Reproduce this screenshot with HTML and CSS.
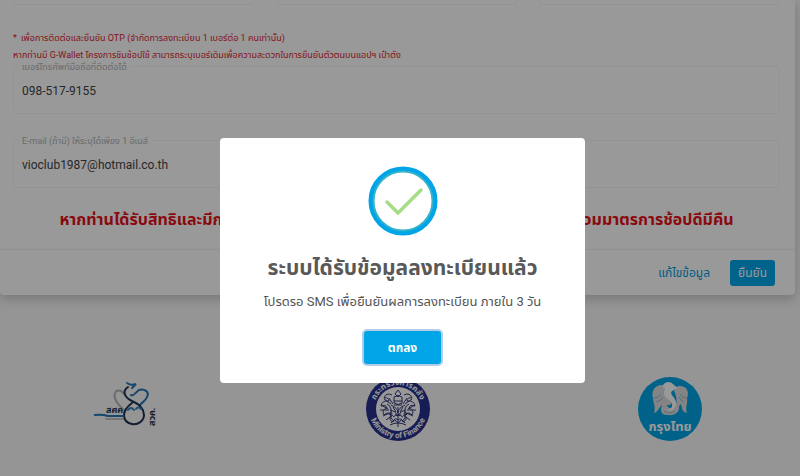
FILE: index.html
```html
<!DOCTYPE html>
<html lang="th">
<head>
    <meta charset="UTF-8">
    <meta name="viewport" content="width=device-width, initial-scale=1.0">
    <title>ลงทะเบียน</title>
    <link rel="stylesheet" href="styles.css">
</head>
<body>
    <main class="page">
        <form class="card">
            <div class="card-body">
                <div class="field-row">
                    <div class="field-end"></div>
                    <div class="field-end"></div>
                    <div class="field-end"></div>
                </div>

                <div class="notice">
                    <p><span class="star">*</span> เพื่อการติดต่อและยืนยัน OTP (จำกัดการลงทะเบียน 1 เบอร์ต่อ 1 คนเท่านั้น)</p>
                    <p>หากท่านมี G-Wallet โครงการชิมช้อปใช้ สามารถระบุเบอร์เดิมเพื่อความสะดวกในการยืนยันตัวตนบนแอปฯ เป๋าตัง</p>
                </div>

                <div class="field">
                    <label for="phone">เบอร์โทรศัพท์มือถือที่ติดต่อได้</label>
                    <input type="text" id="phone" value="098-517-9155">
                </div>
                <div class="field">
                    <label for="email">E-mail (ถ้ามี) ให้ระบุได้เพียง 1 อีเมล์</label>
                    <input type="text" id="email" value="vioclub1987@hotmail.co.th">
                </div>

                <h3 class="warning">หากท่านได้รับสิทธิและมีการใช้จ่ายตามโครงการภายในระยะเวลา จะไม่สามารถเข้าร่วมมาตรการช้อปดีมีคืน</h3>
            </div>

            <div class="card-footer">
                <button type="button" class="btn btn-link">แก้ไขข้อมูล</button>
                <button type="button" class="btn btn-primary">ยืนยัน</button>
            </div>
        </form>

        <footer class="logos">
            <svg class="logo" viewBox="0 0 64 64" role="img" aria-label="สศค.">
                <g fill="none" stroke-linecap="round">
                    <path d="M30 33C24 28 19 21 21 16C22 13 27 12 30 17" stroke="#b4b4b4" stroke-width="2"/>
                    <path d="M33 6Q37 9 42 7L38 11" stroke="#2878b8" stroke-width="2"/>
                    <path d="M37 18C39 20 42 15 45 13C50 11 56 15 53 20C51 25 48 25 46 28" stroke="#2873b4" stroke-width="2"/>
                    <path d="M34 10C28 14 30 20 38 24C45 27 50 31 50 38C50 44 44 48 38 47C32 46 30 42 30 38C30 33 34 29 38 26" stroke="#1e3250" stroke-width="2"/>
                    <path d="M34 33Q37 29 40 33M42 32Q44 29 47 32" stroke="#3282be" stroke-width="2"/>
                    <path d="M1 38Q8 37 14 39H29" stroke="#2378b8" stroke-width="2"/>
                    <path d="M12 42H29" stroke="#888" stroke-width="1" stroke-dasharray="2 1"/>
                </g>
                <text x="12" y="36" class="fpo-name">สศค.</text>
                <text x="0" y="0" class="fpo-name" transform="translate(61 49) rotate(-90)">สวค.</text>
            </svg>

            <svg class="logo" viewBox="0 0 64 64" role="img" aria-label="Ministry of Finance">
                <defs>
                    <path id="seal-top" d="M8 32A24 24 0 0 1 56 32"/>
                    <path id="seal-bottom" d="M3 32A29 29 0 0 0 61 32"/>
                </defs>
                <circle cx="32" cy="32" r="32" fill="#29308c"/>
                <circle cx="32" cy="32" r="22" fill="#fff"/>
                <text class="seal-text"><textPath href="#seal-top" startOffset="50%">กระทรวงการคลัง</textPath></text>
                <text class="seal-text"><textPath href="#seal-bottom" startOffset="50%">Ministry of Finance</textPath></text>
                <g fill="none" stroke="#353b78" stroke-width="1">
                    <path d="M32 13l3 4-3 3-3-3zM28 20q4-3 8 0v6q-4 3-8 0z"/>
                    <path d="M26 18q-6-3-8 3q5-1 5 3q-7-1-8 5q5-2 6 2q-6 2-3 7q4-4 7 0q-3 5 2 7q2-5 5-2"/>
                    <path d="M38 18q6-3 8 3q-5-1-5 3q7-1 8 5q-5-2-6 2q6 2 3 7q-4-4-7 0q3 5-2 7q-2-5-5-2"/>
                    <path d="M25 28q7 3 7 8q0-5 7-8M24 33q5 0 8 6q3-6 8-6M27 40q5-4 10 0M29 43q3 5 6 0M32 30v20"/>
                    <path d="M21 27q3 1 4 5t-2 6M43 27q-3 1-4 5t2 6M26 36q-3 5 2 8M38 36q3 5-2 8M23 21l4 6M41 21l-4 6"/>
                    <path d="M14 33h9M41 33h9M17 39l9-4M47 39l-9-4M20 43l7-5M44 43l-7-5M24 48q8-4 16 0M25 46l4-4M39 46l-4-4"/>
                    <path d="M15 28l7 4M49 28l-7 4M18 22l7 5M46 22l-7 5M27 30l3 5M37 30l-3 5M28 24h8M28 28h8M29 38h6"/>
                </g>
            </svg>

            <svg class="logo" viewBox="0 0 64 64" role="img" aria-label="กรุงไทย">
                <circle cx="32" cy="32" r="32" fill="#00a4e4"/>
                <path d="M24 8C16 8 13 15 15 21C15 26 18 29 16 36C21 34 21 30 24 28C22 33 23 38 29 38C37 39 42 35 41 29L43 27C44 31 44 35 49 36C47 31 50 26 49 21C52 14 48 8 40 9L36 14C39 20 40 27 36 30C33 32 29 31 29 28C34 29 35 24 31 22C26 20 24 16 27 12Z" fill="#ddd"/>
                <path d="M27 6Q32 3 36 8L40 11L34 14C31 17 37 20 38 25C39 31 34 35 29 33C35 32 36 27 31 23C26 20 24 16 27 12L24 9Z" fill="#fff"/>
                <path d="M16 21Q21 21 23 17M18 25Q23 24 25 20M48 21Q44 21 42 17M46 25Q43 24 41 20M26 34Q31 38 37 34" fill="none" stroke="#8bbdd2" stroke-width="1"/>
                <text x="32" y="54" class="bank-name">กรุงไทย</text>
            </svg>
        </footer>
    </main>

    <div class="overlay">
        <div class="modal" role="dialog" aria-modal="true" aria-labelledby="modal-title">
            <svg class="modal-icon" viewBox="0 0 70 70" aria-hidden="true">
                <circle cx="35" cy="35" r="30.5" fill="none" stroke="#35b3cb" stroke-width="4"/>
                <circle cx="35" cy="35" r="32.5" fill="none" stroke="#00a5e8" stroke-width="4"/>
                <path d="M19 36L30 47L53 24" fill="none" stroke="#a5dc86" stroke-width="3.5" stroke-linecap="round"/>
            </svg>
            <h2 id="modal-title">ระบบได้รับข้อมูลลงทะเบียนแล้ว</h2>
            <p>โปรดรอ SMS เพื่อยืนยันผลการลงทะเบียน ภายใน 3 วัน</p>
            <button type="button" class="btn btn-confirm">ตกลง</button>
        </div>
    </div>
</body>
</html>
```
FILE: styles.css
```css
* {
    margin: 0;
    padding: 0;
    box-sizing: border-box;
}

body {
    font-family: Roboto, "Noto Sans Thai", "Noto Sans", sans-serif;
    font-size: 12px;
    background: #f8f8f8;
    color: #333;
    overflow: hidden;
}

.card {
    background: white;
    margin-right: 5px;
    border-radius: 0 0 4px 4px;
    box-shadow: 0 4px 12px rgba(0,0,0,0.2);
}

.card-body {
    padding: 0 15px 0 13px;
}

.field-row {
    display: grid;
    grid-template-columns: repeat(3, 1fr);
    gap: 22px;
    margin-bottom: 25px;
}

.field-end {
    height: 5px;
    border: 1px solid #f6f6f6;
    border-top: none;
    border-radius: 0 0 4px 4px;
}

.notice {
    color: #dc1e32;
    font-size: 9px;
    line-height: 17px;
    white-space: nowrap;
    margin-bottom: 2px;
}

.star {
    margin-right: 2px;
}

.field {
    position: relative;
    border: 1px solid #f6f6f6;
    border-radius: 4px;
    margin-bottom: 26px;
}

/* label sits on the top border of its field */
.field label {
    position: absolute;
    top: -7px;
    left: 4px;
    padding: 0 4px;
    background: white;
    color: #b0b0b0;
    font-size: 9px;
    line-height: 14px;
}

.field input {
    display: block;
    width: 100%;
    height: 46px;
    padding: 2px 8px 0;
    border: none;
    background: none;
    color: #444;
    font-family: inherit;
    font-size: 12px;
}

.warning {
    color: #e60f19;
    font-size: 16px;
    line-height: 24px;
    display: flex;
    justify-content: center;
    white-space: nowrap;
    margin: -6px 0 17px;
}

.card-footer {
    display: flex;
    justify-content: flex-end;
    align-items: center;
    gap: 12px;
    padding: 10px 20px 9px;
    border-top: 1px solid #f0f0f0;
}

.btn {
    border: none;
    border-radius: 3px;
    font-family: inherit;
    font-size: 12px;
    line-height: 18px;
    padding: 4px 8px;
}

.btn-link {
    background: none;
    color: #009cdc;
}

.btn-primary {
    background: #00a5e8;
    color: white;
}

.logos {
    display: flex;
    justify-content: space-between;
    padding: 82px 98px 0 94px;
}

.logo {
    width: 64px;
    height: 64px;
}

.fpo-name {
    font-size: 9px;
    font-weight: bold;
    fill: #1e3250;
}

.seal-text {
    font-size: 8px;
    font-weight: bold;
    text-anchor: middle;
    fill: white;
}

.bank-name {
    font-size: 13px;
    font-weight: bold;
    text-anchor: middle;
    fill: white;
}

.overlay {
    position: fixed;
    inset: 0;
    display: flex;
    align-items: center;
    justify-content: center;
    padding: 44px 0 0 5px;
    background: rgba(0,0,0,0.4);
}

.modal {
    display: flex;
    flex-direction: column;
    align-items: center;
    width: 46%;
    min-width: 320px;
    padding: 28px 16px 19px;
    background: white;
    border-radius: 4px;
    text-align: center;
    color: #545454;
}

.modal-icon {
    width: 70px;
    height: 70px;
    margin-bottom: 16px;
}

.modal h2 {
    color: #595959;
    font-size: 21px;
    line-height: 32px;
    margin-bottom: 8px;
    white-space: nowrap;
}

.modal p {
    font-size: 13px;
    line-height: 20px;
    margin-bottom: 19px;
}

.btn-confirm {
    background: #00a5e8;
    color: white;
    font-weight: bold;
    padding: 8px 24px 7px;
    box-shadow: 0 0 0 2px #b4cde6;
}
```
